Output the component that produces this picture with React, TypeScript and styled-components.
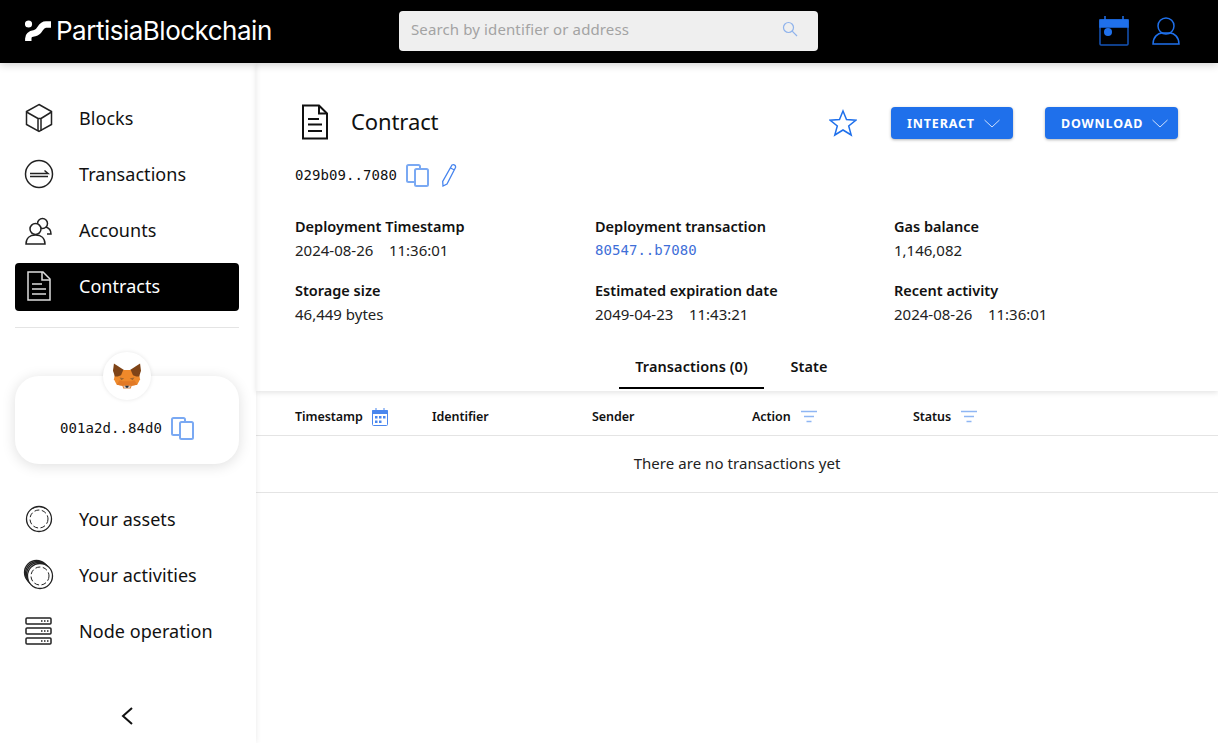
import React from "react";
import styled, { createGlobalStyle } from "styled-components";

const Global = createGlobalStyle`
  html, body { margin: 0; padding: 0; background: #fff; }
  body { font-family: "Noto Sans", "Open Sans", sans-serif; color: #111; }
  * { box-sizing: border-box; }
`;
const BLUE = "#1f70eb";
const Page = styled.div`width: 1218px; height: 743px; display: flex; flex-direction: column; overflow: hidden;`;
const TopBar = styled.header`
  height: 63px; flex: none; background: #000; display: flex; align-items: center; position: relative; z-index: 3;
  box-shadow: 0 2px 8px rgba(0,0,0,.18); padding: 0 0 2px 25px;
`;
const Logo = styled.div`width: 374px; display: flex; align-items: center; gap: 5px; color: #fff;`;
const LogoText = styled.span`font-family: Inter, sans-serif; font-size: 26px; font-weight: 400; letter-spacing: -.5px; line-height: 30px;`;
const Search = styled.div`
  width: 419px; height: 40px; background: #efefef; border-radius: 4px; display: flex; align-items: center;
  justify-content: space-between; padding: 0 20px 3px 12px; font-size: 15px; color: #a3a3a3; letter-spacing: .12px;
`;
const TopIcons = styled.div`margin-left: auto; display: flex; align-items: center; gap: 23px; padding-right: 38px;`;
const Body = styled.div`flex: 1; display: flex; min-height: 0;`;
const Side = styled.aside`
  width: 256px; flex: none; padding: 32px 17px 0 15px; display: flex; flex-direction: column; position: relative; z-index: 2;
  box-shadow: 0 0 6px rgba(0,0,0,.09);
`;
const NavList = styled.nav`display: flex; flex-direction: column; gap: 8px;`;
const NavItem = styled.div<{ $active?: boolean }>`
  height: 48px; border-radius: 4px; display: flex; align-items: center; padding: 0 0 2px 8px;
  font-size: 18px; letter-spacing: .05px; background: ${p => (p.$active ? "#000" : "transparent")}; color: ${p => (p.$active ? "#fff" : "#111")};
`;
const NavIcon = styled.span`width: 56px; height: 32px; display: flex; align-items: center; flex: none;`;
const Divider = styled.hr`border: 0; border-top: 1px solid #e4e4e4; margin: 16px 0 0;`;
const Wallet = styled.div`
  margin-top: 48px; height: 88px; border-radius: 24px; background: #fff; box-shadow: 0 2px 14px rgba(0,0,0,.13);
  position: relative; display: flex; align-items: center; justify-content: center; gap: 9px; padding-top: 16px;
  margin-bottom: 32px;
`;
const Avatar = styled.div`
  position: absolute; top: -24px; left: 88px; width: 48px; height: 48px; border-radius: 50%; background: #fff;
  box-shadow: 0 0 4px rgba(0,0,0,.1); display: flex; align-items: center; justify-content: center;
`;
const Mono = styled.span`font-family: "DejaVu Sans Mono", monospace; font-size: 14px; letter-spacing: .07px;`;
const Collapse = styled.div`margin-top: 50px; display: flex; justify-content: center;`;
const Main = styled.main`flex: 1; display: flex; flex-direction: column; min-width: 0;`;
const Summary = styled.section`padding: 33px 40px 0 39px; position: relative; z-index: 1; box-shadow: 0 2px 5px rgba(0,0,0,.1); height: 328px;`;
const TitleRow = styled.div`display: flex; align-items: center; height: 52px;`;
const TitleIcon = styled.span`width: 56px; display: flex; padding-left: 6px;`;
const Title = styled.h1`margin: 0; font-size: 22px; font-weight: 400; letter-spacing: -.1px; position: relative; top: -1px;`;
const Actions = styled.div`margin-left: auto; display: flex; align-items: center; padding-top: 2px;`;
const Star = styled.span`display: flex; margin-right: 2px;`;
const ActionButton = styled.button<{ $w: number }>`
  width: ${p => p.$w}px; height: 32px; border: 0; border-radius: 4px; background: ${BLUE}; color: #fff; font: 700 12.5px "Noto Sans", sans-serif;
  letter-spacing: .85px; display: flex; align-items: center; justify-content: flex-start; gap: 9px;
  box-shadow: 0 1px 3px rgba(0,0,0,.3); margin-left: 32px; padding: 0 0 0 16px;
`;
const AddressRow = styled.div`display: flex; align-items: center; height: 28px; margin-top: 13px; gap: 9px;`;
const Facts = styled.div`display: grid; grid-template-columns: 300px 299px 1fr; row-gap: 16px; margin-top: 25px;`;
const Fact = styled.div`display: flex; flex-direction: column; height: 48px;`;
const FactLabel = styled.span`font-size: 14.5px; font-weight: 600; line-height: 24px; height: 24px;`;
const FactValue = styled.span`font-size: 15px; line-height: 24px; white-space: pre; color: #222;`;
const Link = styled(FactValue)`font-family: "DejaVu Sans Mono", monospace; font-size: 14px; color: #3f6fd8; letter-spacing: .05px;`;
const Tabs = styled.div`display: flex; padding-left: 324px; margin-top: 24px; gap: 5px;`;
const Tab = styled.div<{ $active?: boolean; $w: number }>`
  width: ${p => p.$w}px; height: 39px; text-align: center; font-size: 14.5px; font-weight: 600; line-height: 32px; letter-spacing: .1px;
  border-bottom: 2px solid ${p => (p.$active ? "#000" : "transparent")};
`;
const TableHead = styled.div`
  display: grid; grid-template-columns: 137px 160px 160px 161px 1fr; height: 45px; padding-left: 39px; align-items: center;
  border-bottom: 1px solid #e4e4e4; font-size: 12.5px; font-weight: 600; letter-spacing: -.07px; padding-top: 7px;
`;
const HeadCell = styled.div<{ $gap: number }>`display: flex; align-items: center; gap: ${p => p.$gap}px;`;
const EmptyRow = styled.div`
  height: 57px; border-bottom: 1px solid #e4e4e4; display: flex; align-items: center; justify-content: center; font-size: 15px; letter-spacing: .05px;
  color: #222; padding-bottom: 2px;
`;

const Ic: React.FC<{ s?: number; h?: number; children: React.ReactNode; c?: string; w?: number }> = ({ s = 32, h, children, c = "#222", w = 1.5 }) => (
  <svg width={s} height={h ?? s} viewBox={`0 0 ${s} ${h ?? s}`} fill="none" stroke={c} strokeWidth={w} style={{ display: "block", flex: "none" }}>{children}</svg>
);
const CopyIcon = () => (
  <Ic s={23} c="#7aa9f3" w={2}>
    <path d="M14 5V2.500A1.500 1.500 0 0 0 12.500 1H2.500A1.500 1.500 0 0 0 1 2.500v14A1.500 1.500 0 0 0 2.500 18H9" />
    <rect x="9" y="5" width="13" height="17" rx="1.500" />
  </Ic>
);
const Chevron = () => <Ic s={16} h={9} c="#cfe0fb" w={1}><path d="M.5 1l7.500 7 7.500-7" /></Ic>;
const FilterIcon = () => <Ic s={16} h={14} c="#8fb6f3" w={1.500}><path d="M0 1.500h16M3 6.500h10M5.500 11.500h5" /></Ic>;
const Coin = ({ x = 16, y = 16 }: { x?: number; y?: number }) => (
  <><circle cx={x} cy={y} r="12.500" fill="#fff" /><circle cx={x} cy={y} r="9" strokeDasharray="5 2.500" strokeWidth="1" /></>
);
const Fox = () => (
  <svg width="28" height="26" viewBox="0 0 30 27" style={{ display: "block" }}>
    <path d="M2 12h26l1 5-3 6-6 1H10l-6-1-3-6z" fill="#ee8a2c" />
    <path d="M1 0l12 8-2 4-6 2-3 0-2-6z" fill="#7f4417" /><path d="M29 0L17 8l2 4 6 2 3 0 2-6z" fill="#7f4417" />
    <path d="M11 7h8l3 7-4 4h-6l-4-4z" fill="#f0892a" /><path d="M7 15l5 1-3 2zM23 15l-5 1 3 2z" fill="#a0652f" />
    <path d="M4 23l6 1 1 3h8l1-3 6-1-3-5-3 1H10l-3-1z" fill="#e27a26" />
    <path d="M11 24h8l-1 3h-6z" fill="#d7c1b3" /><path d="M13 24h4l-1 2h-2z" fill="#232f3c" />
  </svg>
);
const Facts_ = [
  ["Deployment Timestamp", "2024-08-26    11:36:01"], ["Deployment transaction", "80547..b7080"], ["Gas balance", "1,146,082"],
  ["Storage size", "46,449 bytes"], ["Estimated expiration date", "2049-04-23    11:43:21"], ["Recent activity", "2024-08-26    11:36:01"],
];

export default function App() {
  return (
    <Page>
      <Global />
      <TopBar>
        <Logo>
          <svg width="26" height="21" viewBox="0 0 26 21" style={{ display: "block", flex: "none" }}>
            <circle cx="3.500" cy="4" r="3.600" fill="#fff" />
            <path d="M3.300 21v-2.500C3.300 14 7 13.500 10 13c6-1 4.500-8.500 11-8.500h5" fill="none" stroke="#fff" strokeWidth="6.400" />
          </svg>
          <LogoText>PartisiaBlockchain</LogoText>
        </Logo>
        <Search>
          <span>Search by identifier or address</span>
          <Ic s={16} c="#8fb3ec" w={1.200}><circle cx="6.500" cy="6.500" r="5" /><path d="M10.200 10.200L15 15" /></Ic>
        </Search>
        <TopIcons>
          <Ic s={30} c="#1554b8" w={1.500}>
            <rect x="1" y="4" width="28" height="25" rx="1" /><path d="M1 4h28v7H1z" fill={BLUE} stroke={BLUE} /><path d="M6 0v4M24 0v4" stroke={BLUE} /><circle cx="9" cy="16" r="4" fill={BLUE} stroke="none" />
          </Ic>
          <Ic s={28} h={28} c={BLUE} w={1.500}><circle cx="14" cy="9" r="8" /><path d="M1 27c0-7 5-11 9-11h8c4 0 9 4 9 11z" /></Ic>
        </TopIcons>
      </TopBar>
      <Body>
        <Side>
          <NavList>
            <NavItem><NavIcon>
              <Ic w={1.500}><path d="M16 2.500l12.500 7v13L16 29.500 3.500 22.500v-13z" /><path d="M3.500 10L15 16.500M28.500 10L18 16.500M15 16.500V29M18 16.500V29M15 16.500h3" /></Ic>
            </NavIcon>Blocks</NavItem>
            <NavItem><NavIcon>
              <Ic w={1.500}><circle cx="16" cy="16" r="13.500" /><path d="M7 15.500h18l-3.500-3M7 18.500h18" /></Ic>
            </NavIcon>Transactions</NavItem>
            <NavItem><NavIcon>
              <Ic w={1.500}><circle cx="19.500" cy="9.500" r="5" /><path d="M24 20h4c0-4-2-6-5-7" /><circle cx="12.500" cy="15" r="5.500" fill="#fff" /><path d="M3 30c0-6 4-9 9.500-9s9.500 3 9.500 9z" fill="#fff" /></Ic>
            </NavIcon>Accounts</NavItem>
            <NavItem $active><NavIcon>
              <Ic c="#ddd" w={1.500}><path d="M5 2h15l7 7v21H5z" /><path d="M19 2v8h8" /><path d="M9 14h10M9 19h14M9 24h14" /></Ic>
            </NavIcon>Contracts</NavItem>
          </NavList>
          <Divider />
          <Wallet>
            <Avatar><Fox /></Avatar>
            <Mono>001a2d..84d0</Mono>
            <CopyIcon />
          </Wallet>
          <NavList>
            <NavItem><NavIcon><Ic w={1.300}><Coin /></Ic></NavIcon>Your assets</NavItem>
            <NavItem><NavIcon><Ic w={1.300}><circle cx="13.500" cy="13.500" r="12" /><circle cx="14.500" cy="14.500" r="12" fill="#fff" /><circle cx="15.500" cy="15.500" r="12" fill="#fff" /><Coin x={17} y={17} /></Ic></NavIcon>Your activities</NavItem>
            <NavItem><NavIcon><Ic w={1.500}>
              {[3, 13, 23].map(y => (<g key={y}><rect x="3" y={y} width="25" height="6" rx="1" /><path d={`M18 ${y + 3}h1.500M21 ${y + 3}h1.500M24 ${y + 3}h1.500`} /></g>))}
            </Ic></NavIcon>Node operation</NavItem>
          </NavList>
          <Collapse><Ic s={14} h={20} c="#111" w={2}><path d="M12 2L3 10l9 8" /></Ic></Collapse>
        </Side>
        <Main>
          <Summary>
            <TitleRow>
              <TitleIcon><Ic s={28} h={36} c="#111" w={2}><path d="M2 1.500h16l8 8V34.500H2z" /><path d="M18 1.500v8h8" /><path d="M7 15h11M7 20.500h14M7 27h14" /></Ic></TitleIcon>
              <Title>Contract</Title>
              <Actions>
                <Star><Ic s={28} c={BLUE} w={1.500}><path d="M14 2l3.500 8.500 9.500.7-7.300 5.800 2.500 9L14 21l-8.200 5 2.500-9L1 11.200l9.500-.7z" /></Ic></Star>
                <ActionButton $w={122}>INTERACT <Chevron /></ActionButton>
                <ActionButton $w={133}>DOWNLOAD <Chevron /></ActionButton>
              </Actions>
            </TitleRow>
            <AddressRow>
              <Mono>029b09..7080</Mono>
              <CopyIcon />
              <Ic s={20} h={24} c="#4684ee" w={1.300}><path d="M14 2c2-1 4 .5 3.500 2.500L9 21l-4 2-.3-4.500zM12.500 5l4 2" /></Ic>
            </AddressRow>
            <Facts>
              {Facts_.map(([label, value]) => (
                <Fact key={label}>
                  <FactLabel>{label}</FactLabel>
                  {label === "Deployment transaction" ? <Link as="a">{value}</Link> : <FactValue>{value}</FactValue>}
                </Fact>
              ))}
            </Facts>
            <Tabs>
              <Tab $active $w={145}>Transactions (0)</Tab>
              <Tab $w={80}>State</Tab>
            </Tabs>
          </Summary>
          <TableHead>
            <HeadCell $gap={9}>Timestamp
              <Ic s={16} h={18} c="#4a87ee" w={1}><rect x="0.500" y="2.500" width="15" height="15" rx="1" /><path d="M.5 2.500h15v3H.5z" fill="#4a87ee" /><path d="M4 0v2M12 0v2" /><path d="M3 8h2.500v2.500H3zM7 8h2.500v2.500H7zM11 8h2.500v2.500H11zM3 12.500h2.500V15H3zM7 12.500h2.500V15H7z" fill="#4a87ee" stroke="none" /></Ic>
            </HeadCell>
            <HeadCell $gap={0}>Identifier</HeadCell>
            <HeadCell $gap={0}>Sender</HeadCell>
            <HeadCell $gap={10}>Action <FilterIcon /></HeadCell>
            <HeadCell $gap={10}>Status <FilterIcon /></HeadCell>
          </TableHead>
          <EmptyRow>There are no transactions yet</EmptyRow>
        </Main>
      </Body>
    </Page>
  );
}
